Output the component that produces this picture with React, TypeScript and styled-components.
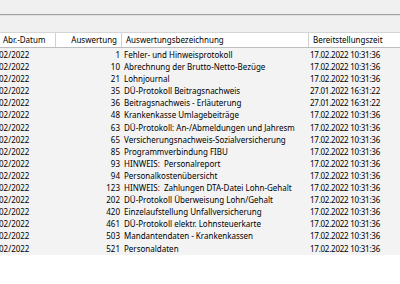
import React from "react";
import styled, { createGlobalStyle } from "styled-components";

const Global = createGlobalStyle`
  html, body { margin: 0; padding: 0; background: #ffffff; }
  body { font-family: "Noto Sans", "Segoe UI", Arial, sans-serif; font-size: 8px; color: #000; }
`;

const Page = styled.div`
  width: 400px;
  height: 284px;
  overflow: hidden;
  display: flex;
  flex-direction: column;
  background: #ffffff;
`;

const TopBar = styled.div`
  height: 14px;
  flex: none;
  background: #f0f0f0;
  border-bottom: 1px solid #a0a0a0;
`;

const Toolbar = styled.div`
  height: 17px;
  flex: none;
  background: #f0f0f0;
  border-top: 1px solid #e3e3e3;
  box-sizing: border-box;
`;

const Columns = "56px 66px 187px 1fr";

const Header = styled.div`
  flex: none;
  display: grid;
  grid-template-columns: ${Columns};
  height: 16px;
  box-sizing: border-box;
  background: #ffffff;
  border-top: 1px solid #d5d5d5;
  border-bottom: 1px solid #bdbdbd;
`;

const HeaderCell = styled.div<{ $align?: "left" | "right"; $pl?: number; $pr?: number }>`
  line-height: 14px;
  height: 14px;
  white-space: nowrap;
  overflow: hidden;
  text-align: ${(p) => p.$align ?? "left"};
  padding-left: ${(p) => p.$pl ?? 0}px;
  padding-right: ${(p) => p.$pr ?? 0}px;
  border-right: 1px solid #d0d0d0;
  box-sizing: border-box;
  &:last-child { border-right: none; }
`;

const Body = styled.div`
  flex: none;
  background: #f3f3f3;
  padding-top: 1px;
  display: flex;
  flex-direction: column;
`;

const Row = styled.div`
  display: grid;
  grid-template-columns: ${Columns};
  height: 12.1px;
  line-height: 12px;
`;

const Cell = styled.div<{ $align?: "left" | "right"; $pl?: number; $pr?: number; $tight?: boolean }>`
  white-space: pre;
  overflow: hidden;
  text-align: ${(p) => p.$align ?? "left"};
  padding-left: ${(p) => p.$pl ?? 0}px;
  padding-right: ${(p) => p.$pr ?? 0}px;
  letter-spacing: ${(p) => (p.$tight ? "-0.25px" : "0")};
  box-sizing: border-box;
`;

const DateText = styled.span`
  display: inline-block;
  margin-left: -1px;
`;

type Item = { nr: number; name: string; time: string };

const T1 = "17.02.2022 10:31:36";
const T2 = "27.01.2022 16:31:22";

const items: Item[] = [
  { nr: 1, name: "Fehler- und Hinweisprotokoll", time: T1 },
  { nr: 10, name: "Abrechnung der Brutto-Netto-Bezüge", time: T1 },
  { nr: 21, name: "Lohnjournal", time: T1 },
  { nr: 35, name: "DÜ-Protokoll Beitragsnachweis", time: T2 },
  { nr: 36, name: "Beitragsnachweis - Erläuterung", time: T2 },
  { nr: 48, name: "Krankenkasse Umlagebeiträge", time: T1 },
  { nr: 63, name: "DÜ-Protokoll: An-/Abmeldungen und Jahresm", time: T1 },
  { nr: 65, name: "Versicherungsnachweis-Sozialversicherung", time: T1 },
  { nr: 85, name: "Programmverbindung FIBU", time: T1 },
  { nr: 93, name: "HINWEIS:  Personalreport", time: T1 },
  { nr: 94, name: "Personalkostenübersicht", time: T1 },
  { nr: 123, name: "HINWEIS:  Zahlungen DTA-Datei Lohn-Gehalt", time: T1 },
  { nr: 202, name: "DÜ-Protokoll Überweisung Lohn/Gehalt", time: T1 },
  { nr: 420, name: "Einzelaufstellung Unfallversicherung", time: T1 },
  { nr: 461, name: "DÜ-Protokoll elektr. Lohnsteuerkarte", time: T1 },
  { nr: 503, name: "Mandantendaten - Krankenkassen", time: T1 },
  { nr: 521, name: "Personaldaten", time: T1 },
];

export default function App() {
  return (
    <>
      <Global />
      <Page>
        <TopBar />
        <Toolbar />
        <Header>
          <HeaderCell $pl={3}>Abr.-Datum</HeaderCell>
          <HeaderCell $align="right" $pr={4}>Auswertung</HeaderCell>
          <HeaderCell $pl={4}>Auswertungsbezeichnung</HeaderCell>
          <HeaderCell $pl={4}>Bereitstellungszeit</HeaderCell>
        </Header>
        <Body>
          {items.map((it) => (
            <Row key={it.nr}>
              <Cell>
                <DateText>02/2022</DateText>
              </Cell>
              <Cell $align="right" $pr={2}>{it.nr}</Cell>
              <Cell $pl={2}>{it.name}</Cell>
              <Cell $pl={1} $tight>{it.time}</Cell>
            </Row>
          ))}
        </Body>
      </Page>
    </>
  );
}
